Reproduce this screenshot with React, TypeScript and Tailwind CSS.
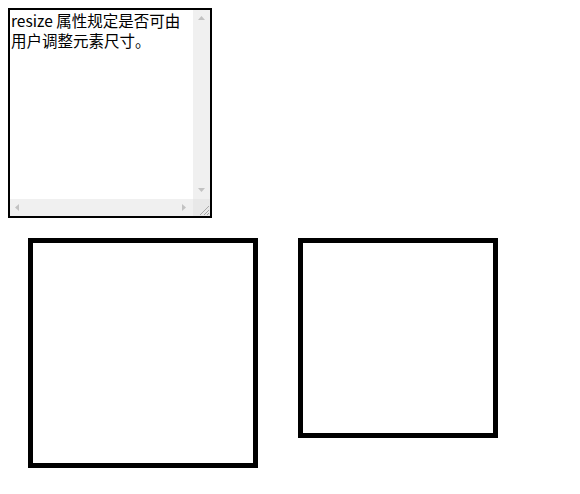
import React from 'react';

function Arrow({ dir }: { dir: 'up' | 'down' | 'left' | 'right' }) {
    const points = {
        up: '0,4 3.5,0 7,4',
        down: '0,0 3.5,4 7,0',
        left: '4,0 0,3.5 4,7',
        right: '0,0 4,3.5 0,7',
    }[dir];
    const vertical = dir === 'up' || dir === 'down';
    return (
        <svg width={vertical ? 7 : 4} height={vertical ? 4 : 7} className="block">
            <polygon points={points} fill="#c2c2c2" />
        </svg>
    );
}

function ResizeGrip() {
    return (
        <svg width="17" height="17" className="block">
            <line x1="16" y1="7" x2="7" y2="16" stroke="#a8a8a8" strokeWidth="1" />
            <line x1="16" y1="11" x2="11" y2="16" stroke="#a8a8a8" strokeWidth="1" />
            <line x1="16" y1="14" x2="14" y2="16" stroke="#a8a8a8" strokeWidth="1" />
        </svg>
    );
}

function FakeTextarea() {
    return (
        <div className="flex h-[210px] w-[204px] flex-col border-2 border-black bg-white">
            <div className="flex min-h-0 flex-1">
                <div className="flex-1 whitespace-nowrap pl-px text-[15.5px] leading-[20px] text-black [font-family:'Noto_Sans_CJK_SC',sans-serif]">
                    resize 属性规定是否可由
                    <br />
                    用户调整元素尺寸。
                </div>
                <div className="flex w-[17px] flex-col items-center justify-between bg-[#f0f0f0] pt-[6px] pb-[7px]">
                    <Arrow dir="up" />
                    <Arrow dir="down" />
                </div>
            </div>
            <div className="flex h-[17px]">
                <div className="flex flex-1 items-center justify-between bg-[#f0f0f0] pl-[5px] pr-[7px]">
                    <Arrow dir="left" />
                    <Arrow dir="right" />
                </div>
                <div className="w-[17px] bg-[#e8e8e8]">
                    <ResizeGrip />
                </div>
            </div>
        </div>
    );
}

export default function App() {
    return (
        <div className="min-h-[494px] bg-white p-2">
            <FakeTextarea />
            <div className="mt-5 flex items-start gap-10 pl-5">
                <div className="box-content h-[220px] w-[220px] border-[5px] border-black" />
                <div className="box-border h-[200px] w-[200px] border-[5px] border-black" />
            </div>
        </div>
    );
}
